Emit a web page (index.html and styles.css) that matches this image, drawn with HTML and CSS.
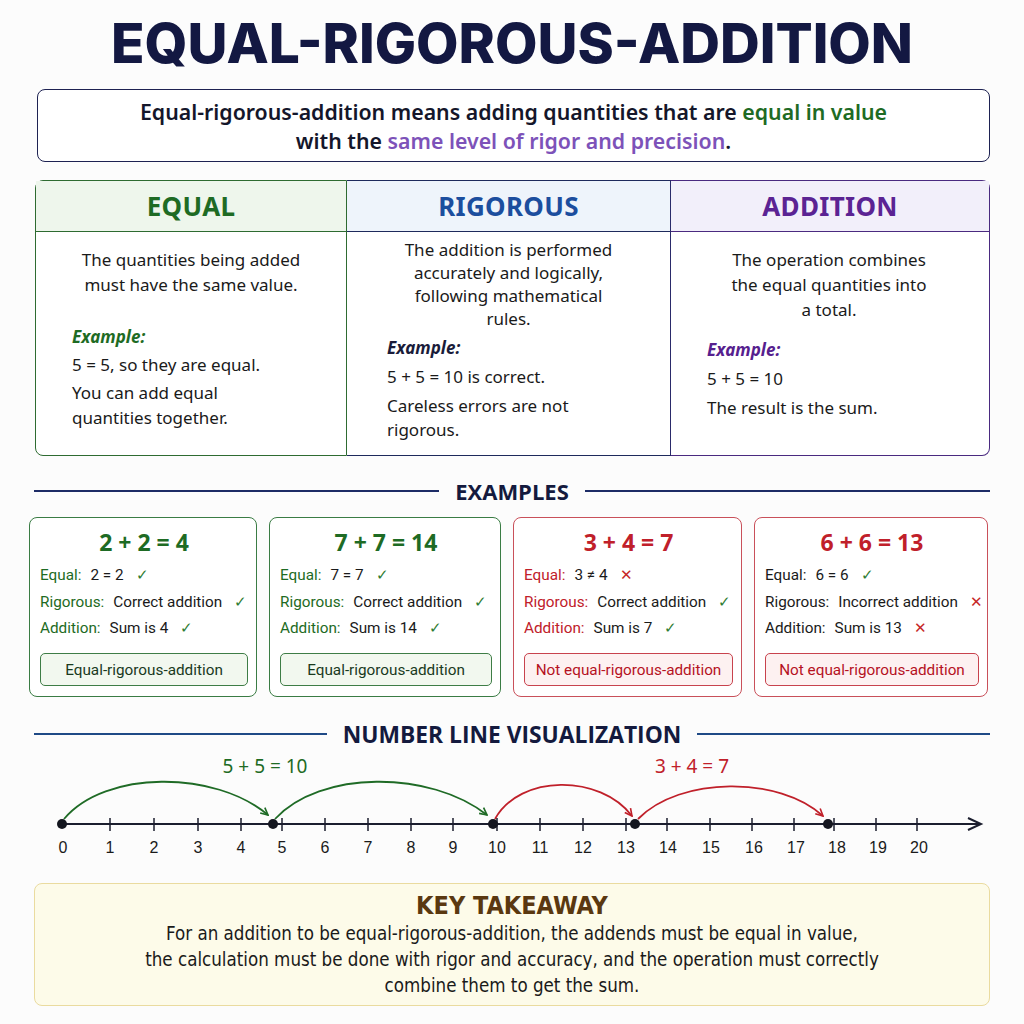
FILE: index.html
```html
<!DOCTYPE html>
<html lang="en">
<head>
<meta charset="utf-8">
<title>Equal-Rigorous-Addition</title>
<link rel="stylesheet" href="styles.css">
</head>
<body>
<main class="page">
  <h1 class="title">EQUAL-RIGOROUS-ADDITION</h1>

  <section class="definition">
    <p>Equal-rigorous-addition means adding quantities that are <span class="g">equal in value</span><br>with the <span class="p">same level of rigor and precision</span>.</p>
  </section>

  <section class="columns">
    <div class="col col-equal">
      <h2 class="col-head">EQUAL</h2>
      <div class="col-body">
        <p class="desc">The quantities being added<br>must have the same value.</p>
        <p class="ex-label">Example:</p>
        <p class="ex-line">5 = 5, so they are equal.</p>
        <p class="ex-line">You can add equal<br>quantities together.</p>
      </div>
    </div>
    <div class="col col-rig">
      <h2 class="col-head">RIGOROUS</h2>
      <div class="col-body">
        <p class="desc">The addition is performed<br>accurately and logically,<br>following mathematical<br>rules.</p>
        <p class="ex-label">Example:</p>
        <p class="ex-line">5 + 5 = 10 is correct.</p>
        <p class="ex-line">Careless errors are not<br>rigorous.</p>
      </div>
    </div>
    <div class="col col-add">
      <h2 class="col-head">ADDITION</h2>
      <div class="col-body">
        <p class="desc">The operation combines<br>the equal quantities into<br>a total.</p>
        <p class="ex-label">Example:</p>
        <p class="ex-line">5 + 5 = 10</p>
        <p class="ex-line">The result is the sum.</p>
      </div>
    </div>
  </section>

  <div class="section-head head-examples"><span class="rule"></span><h3>EXAMPLES</h3><span class="rule"></span></div>

  <section class="cards">
    <div class="card good">
      <div class="eq">2 + 2 = 4</div>
      <div class="row"><span class="lab">Equal:</span><span>2 = 2</span><span class="ok">✓</span></div>
      <div class="row"><span class="lab">Rigorous:</span><span>Correct addition</span><span class="ok">✓</span></div>
      <div class="row"><span class="lab">Addition:</span><span>Sum is 4</span><span class="ok">✓</span></div>
      <div class="badge">Equal-rigorous-addition</div>
    </div>
    <div class="card good">
      <div class="eq">7 + 7 = 14</div>
      <div class="row"><span class="lab">Equal:</span><span>7 = 7</span><span class="ok">✓</span></div>
      <div class="row"><span class="lab">Rigorous:</span><span>Correct addition</span><span class="ok">✓</span></div>
      <div class="row"><span class="lab">Addition:</span><span>Sum is 14</span><span class="ok">✓</span></div>
      <div class="badge">Equal-rigorous-addition</div>
    </div>
    <div class="card bad">
      <div class="eq">3 + 4 = 7</div>
      <div class="row"><span class="lab">Equal:</span><span>3 ≠ 4</span><span class="no">✕</span></div>
      <div class="row"><span class="lab">Rigorous:</span><span>Correct addition</span><span class="ok">✓</span></div>
      <div class="row"><span class="lab">Addition:</span><span>Sum is 7</span><span class="ok">✓</span></div>
      <div class="badge">Not equal-rigorous-addition</div>
    </div>
    <div class="card bad plain">
      <div class="eq">6 + 6 = 13</div>
      <div class="row"><span class="lab">Equal:</span><span>6 = 6</span><span class="ok">✓</span></div>
      <div class="row"><span class="lab">Rigorous:</span><span>Incorrect addition</span><span class="no">✕</span></div>
      <div class="row"><span class="lab">Addition:</span><span>Sum is 13</span><span class="no">✕</span></div>
      <div class="badge">Not equal-rigorous-addition</div>
    </div>
  </section>

  <div class="section-head head-line"><span class="rule"></span><h3>NUMBER LINE VISUALIZATION</h3><span class="rule"></span></div>

  <svg class="numline" width="1024" height="115" viewBox="0 745 1024 115" xmlns="http://www.w3.org/2000/svg">
    <defs>
      <marker id="ag" viewBox="0 0 10 10" refX="9" refY="5" markerWidth="9" markerHeight="9" orient="auto" markerUnits="userSpaceOnUse">
        <path d="M1 1 L9 5 L1 9" fill="none" stroke="#1f6b26" stroke-width="1.8"/>
      </marker>
      <marker id="ar" viewBox="0 0 10 10" refX="9" refY="5" markerWidth="9" markerHeight="9" orient="auto" markerUnits="userSpaceOnUse">
        <path d="M1 1 L9 5 L1 9" fill="none" stroke="#c0202a" stroke-width="1.8"/>
      </marker>
    </defs>
    <text class="nl-lab g" x="265" y="771" text-anchor="middle">5 + 5 = 10</text>
    <text class="nl-lab r" x="692" y="771" text-anchor="middle">3 + 4 = 7</text>

    <path d="M64 817 C 105 768, 215 768, 268 813" fill="none" stroke="#1f6b26" stroke-width="1.8" marker-end="url(#ag)"/>
    <path d="M275 817 C 320 768, 430 768, 487 813" fill="none" stroke="#1f6b26" stroke-width="1.8" marker-end="url(#ag)"/>
    <path d="M495 817 C 520 772, 600 772, 632 814" fill="none" stroke="#c0202a" stroke-width="1.8" marker-end="url(#ar)"/>
    <path d="M638 817 C 680 774, 780 774, 823 814" fill="none" stroke="#c0202a" stroke-width="1.8" marker-end="url(#ar)"/>

    <line x1="62" y1="822" x2="980" y2="822" stroke="#1b1e2e" stroke-width="2"/>
    <path d="M968 816 L981 822 L968 828" fill="none" stroke="#1b1e2e" stroke-width="2"/>

    <g stroke="#1b1e2e" stroke-width="1.5">
      <line x1="110" y1="816" x2="110" y2="829"/>
      <line x1="154" y1="816" x2="154" y2="829"/>
      <line x1="198" y1="816" x2="198" y2="829"/>
      <line x1="241" y1="816" x2="241" y2="829"/>
      <line x1="282" y1="816" x2="282" y2="829"/>
      <line x1="325" y1="816" x2="325" y2="829"/>
      <line x1="368" y1="816" x2="368" y2="829"/>
      <line x1="411" y1="816" x2="411" y2="829"/>
      <line x1="453" y1="816" x2="453" y2="829"/>
      <line x1="497" y1="816" x2="497" y2="829"/>
      <line x1="540" y1="816" x2="540" y2="829"/>
      <line x1="583" y1="816" x2="583" y2="829"/>
      <line x1="626" y1="816" x2="626" y2="829"/>
      <line x1="667" y1="816" x2="667" y2="829"/>
      <line x1="710" y1="816" x2="710" y2="829"/>
      <line x1="752" y1="816" x2="752" y2="829"/>
      <line x1="794" y1="816" x2="794" y2="829"/>
      <line x1="834" y1="816" x2="834" y2="829"/>
      <line x1="876" y1="816" x2="876" y2="829"/>
      <line x1="917" y1="816" x2="917" y2="829"/>
    </g>

    <g fill="#14161f">
      <circle cx="62" cy="822" r="5"/>
      <circle cx="273" cy="822" r="5"/>
      <circle cx="493" cy="822" r="5"/>
      <circle cx="635" cy="822" r="5"/>
      <circle cx="828" cy="822" r="5"/>
    </g>

    <g class="nl-num" text-anchor="middle">
      <text x="63" y="851">0</text>
      <text x="110" y="851">1</text>
      <text x="154" y="851">2</text>
      <text x="198" y="851">3</text>
      <text x="241" y="851">4</text>
      <text x="282" y="851">5</text>
      <text x="325" y="851">6</text>
      <text x="368" y="851">7</text>
      <text x="411" y="851">8</text>
      <text x="453" y="851">9</text>
      <text x="497" y="851">10</text>
      <text x="540" y="851">11</text>
      <text x="583" y="851">12</text>
      <text x="626" y="851">13</text>
      <text x="668" y="851">14</text>
      <text x="711" y="851">15</text>
      <text x="754" y="851">16</text>
      <text x="796" y="851">17</text>
      <text x="837" y="851">18</text>
      <text x="878" y="851">19</text>
      <text x="919" y="851">20</text>
    </g>
  </svg>

  <section class="takeaway">
    <h3>KEY TAKEAWAY</h3>
    <p>For an addition to be equal-rigorous-addition, the addends must be equal in value,<br>the calculation must be done with rigor and accuracy, and the operation must correctly<br>combine them to get the sum.</p>
  </section>
</main>
</body>
</html>
```

FILE: styles.css
```css
* { box-sizing: border-box; }
html, body { margin: 0; padding: 0; }
body {
  background: #fcfcfc;
  font-family: "Noto Sans", "Open Sans", sans-serif;
  color: #1a1a1a;
  width: 1024px;
  height: 1024px;
  overflow: hidden;
}
p, h1, h2, h3 { margin: 0; }
.page { padding: 0 34px; }

.title {
  font-family: Inter, "Open Sans", sans-serif;
  font-weight: 800;
  font-size: 55px;
  line-height: 56px;
  letter-spacing: 0;
  text-align: center;
  color: #131842;
  padding-top: 15px;
  height: 89px;
}

.definition {
  margin-left: 3px;
  height: 73px;
  border: 1.5px solid #1e2252;
  border-radius: 8px;
  display: flex;
  align-items: center;
  justify-content: center;
  text-align: center;
  background: #fff;
}
.definition p {
  font-size: 21.3px;
  line-height: 29px;
  font-weight: 600;
  color: #14162a;
}
.g { color: #1e6b24; }
.p { color: #7d52b9; }

.columns {
  margin-top: 18px;
  margin-left: 1px;
  display: grid;
  grid-template-columns: 312px 324px 319px;
  height: 276px;
}
.col { display: flex; flex-direction: column; background: #fff; }
.col-head {
  height: 51px;
  display: flex;
  align-items: center;
  justify-content: center;
  font-size: 26px;
  font-weight: 700;
  letter-spacing: 0.3px;
}
.col-body { flex: 1; padding: 0 20px 0 36px; font-size: 17px; line-height: 25px; color: #1a1a1a; }
.desc { text-align: center; margin-left: -16px; }
.ex-label { font-style: italic; font-weight: 700; }

.col-equal { border: 1.5px solid #2e6b31; border-radius: 8px 0 0 8px; }
.col-equal .col-head { background: #eef6ec; color: #1e6b24; border-bottom: 1.5px solid #2e6b31; }
.col-equal .col-body { padding-top: 15px; }
.col-equal .ex-label { color: #1e6b24; margin-top: 27px; }
.col-equal .ex-line { margin-top: 3px; }

.col-rig { border-top: 1.5px solid #1e2a5c; border-bottom: 1.5px solid #1e2a5c; border-right: 1.5px solid #2a2a6a; }
.col-rig .col-head { background: #eef4fb; color: #1c4e9e; border-bottom: 1.5px solid #1e2a5c; }
.col-rig .col-body { padding-top: 6px; padding-left: 40px; line-height: 23px; }
.col-rig .desc { margin-left: -20px; }
.col-rig .ex-label { color: #1a1c3a; margin-top: 5px; line-height: 25px; }
.col-rig .ex-line { margin-top: 5px; line-height: 24px; }

.col-add { border: 1.5px solid #4a2a80; border-left: none; border-radius: 0 8px 8px 0; }
.col-add .col-head { background: #f2effa; color: #5b2393; border-bottom: 1.5px solid #4a2a80; }
.col-add .col-body { padding-top: 15px; }
.col-add .desc { margin-left: -18px; }
.col-add .ex-label { color: #56208e; margin-top: 15px; }
.col-add .ex-line { margin-top: 4px; }

.section-head {
  display: flex;
  align-items: center;
  gap: 16px;
}
.section-head .rule { flex: 1; height: 2px; background: #1d2c66; }
.section-head h3 {
  font-family: "Open Sans", "Noto Sans", sans-serif;
  font-weight: 700;
  color: #141a3e;
}
.head-examples { margin-top: 22px; height: 26px; }
.head-examples h3 { font-size: 22px; }
.head-line { margin-top: 24px; height: 26px; }
.head-line .rule { background: #1f4a86; }
.head-line h3 { font-size: 22.8px; }

.cards {
  margin-top: 13px;
  margin-left: -5px;
  display: grid;
  grid-template-columns: 228px 232px 229px 234px;
  column-gap: 12px;
  height: 180px;
}
.card {
  border: 1.5px solid #3a7c44;
  border-radius: 8px;
  background: #fff;
  padding: 7px 8px 10px 10px;
  display: flex;
  flex-direction: column;
}
.card.bad { border-color: #c9505a; }
.eq {
  text-align: center;
  font-size: 23px;
  font-weight: 700;
  line-height: 34px;
  color: #1e6b24;
  margin-bottom: 3px;
}
.bad .eq { color: #c0202a; }
.row {
  font-family: Roboto, "Noto Sans", sans-serif;
  font-size: 15.3px;
  line-height: 26.5px;
  display: flex;
  gap: 9px;
  white-space: nowrap;
  color: #1a1a1a;
}
.row .lab { color: #1e6b24; }
.bad .row .lab { color: #c0202a; }
.bad.plain .row .lab { color: #1a1a1a; }
.ok { color: #2e7d32; margin-left: 3px; }
.no { color: #c62828; margin-left: 3px; }
.badge {
  margin-top: auto;
  height: 33px;
  border: 1.5px solid #3e7d46;
  border-radius: 5px;
  background: #f2f8ef;
  display: flex;
  align-items: center;
  justify-content: center;
  font-family: Roboto, "Noto Sans", sans-serif;
  font-size: 15.3px;
  color: #1a3a1e;
}
.bad .badge { border-color: #c8424d; background: #fdf1f1; color: #b5121f; }

.numline { display: block; margin: 0 -34px; }
.nl-lab { font-family: "Noto Sans", sans-serif; font-size: 19px; }
.nl-lab.g { fill: #1e6b24; }
.nl-lab.r { fill: #c0202a; }
.nl-num { font-family: "Liberation Sans", Arial, sans-serif; font-size: 16px; fill: #1a1a1a; }

.takeaway {
  margin-top: 21px;
  height: 123px;
  background: #fdfbe9;
  border: 1.5px solid #eadb9f;
  border-radius: 8px;
  text-align: center;
  padding-top: 7px;
}
.takeaway h3 {
  font-family: "DejaVu Sans Condensed", "DejaVu Sans", sans-serif;
  font-stretch: condensed;
  font-weight: 700;
  font-size: 25px;
  line-height: 30px;
  color: #5a3810;
}
.takeaway p {
  font-family: "DejaVu Sans Condensed", "DejaVu Sans", sans-serif;
  font-stretch: condensed;
  font-size: 18.6px;
  line-height: 26px;
  color: #1a1a1a;
}
```
